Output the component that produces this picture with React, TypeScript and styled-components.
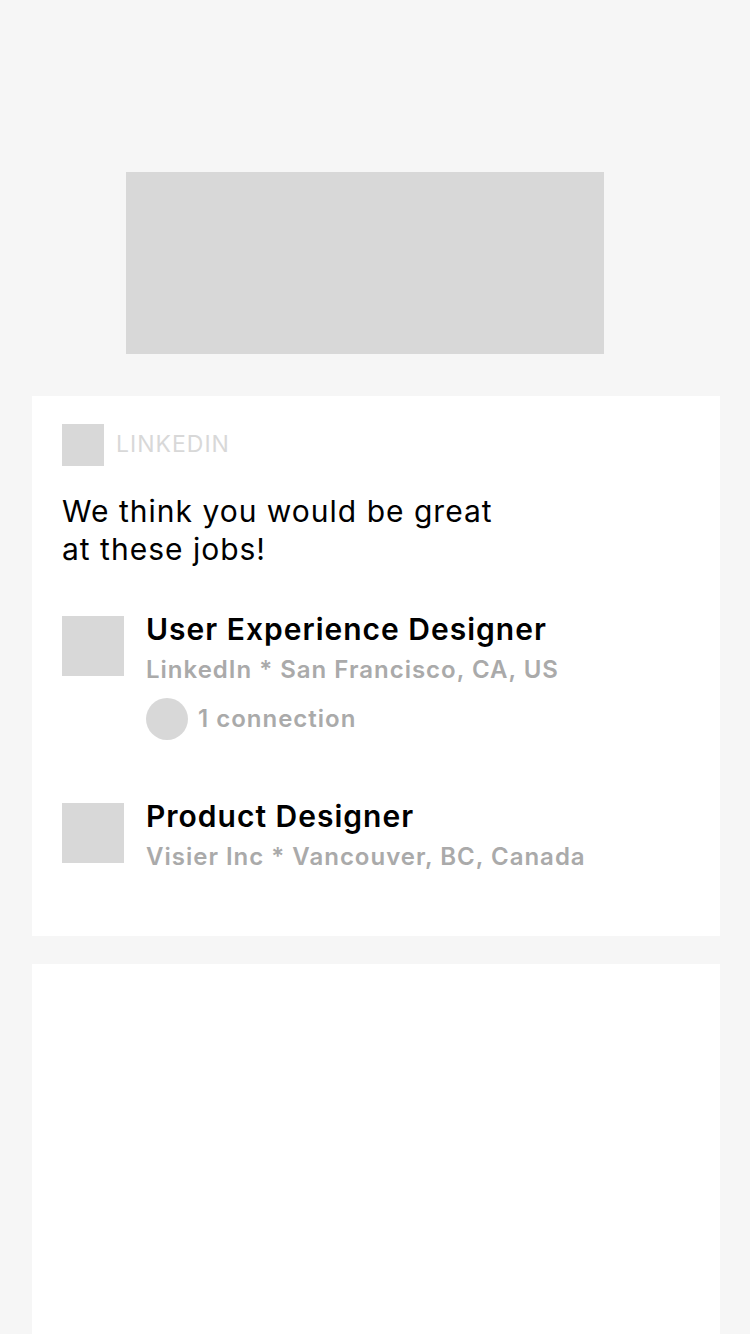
import React from "react";
import styled, { createGlobalStyle } from "styled-components";

const GlobalStyle = createGlobalStyle`
  * { box-sizing: border-box; }
  html, body, #root { height: 100%; }
  body {
    margin: 0;
    background: #f6f6f6;
    font-family: Inter, "Liberation Sans", sans-serif;
    color: #000;
  }
`;

const Page = styled.main`
  min-height: 100%;
  display: flex;
  flex-direction: column;
  gap: 28px;
  padding: 172px 30px 0 32px;
`;

const Banner = styled.div`
  width: 70%;
  max-width: 478px;
  height: 182px;
  margin: 0 22px 14px 94px;
  background: #d8d8d8;
`;

const Card = styled.section<{ $fill?: boolean }>`
  background: #fff;
  padding: 28px 30px 58px;
  flex: ${(p) => (p.$fill ? "1 0 auto" : "none")};
`;

const Source = styled.header`
  display: flex;
  align-items: flex-start;
  gap: 12px;
  color: #d8d8d8;
  font-size: 23px;
  line-height: 40px;
  letter-spacing: 1px;
`;

const SourceLogo = styled.span`
  width: 42px;
  height: 42px;
  background: #d8d8d8;
`;

const Headline = styled.h1`
  margin: 26px 0 0;
  font-size: 30px;
  font-weight: 400;
  line-height: 38px;
  letter-spacing: 1px;
`;

const JobList = styled.ul`
  list-style: none;
  margin: 41px 0 0;
  padding: 0;
  display: flex;
  flex-direction: column;
  gap: 56px;
`;

const Job = styled.li`
  display: flex;
  align-items: flex-start;
  gap: 22px;
`;

const JobLogo = styled.div`
  flex: none;
  width: 62px;
  height: 60px;
  margin-top: 7px;
  background: #d8d8d8;
`;

const JobTitle = styled.h2`
  margin: 0;
  font-size: 30px;
  font-weight: 600;
  line-height: 40px;
  letter-spacing: 1px;
`;

const Meta = styled.p`
  margin: 0;
  font-size: 24px;
  font-weight: 600;
  line-height: 42px;
  letter-spacing: 1px;
  color: #aaa;
`;

const Connection = styled.div`
  display: flex;
  align-items: center;
  gap: 10px;
  margin-top: 7px;
`;

const Avatar = styled.span`
  width: 42px;
  height: 42px;
  border-radius: 50%;
  background: #d8d8d8;
`;

const jobs = [
  { title: "User Experience Designer", place: "LinkedIn * San Francisco, CA, US", connections: "1 connection" },
  { title: "Product Designer", place: "Visier Inc * Vancouver, BC, Canada" },
];

export default function App() {
  return (
    <>
      <GlobalStyle />
      <Page>
        <Banner />
        <Card>
          <Source>
            <SourceLogo />
            <span>LINKEDIN</span>
          </Source>
          <Headline>
            We think you would be great
            <br />
            at these jobs!
          </Headline>
          <JobList>
            {jobs.map((job) => (
              <Job key={job.title}>
                <JobLogo />
                <div>
                  <JobTitle>{job.title}</JobTitle>
                  <Meta>{job.place}</Meta>
                  {job.connections && (
                    <Connection>
                      <Avatar />
                      <Meta>{job.connections}</Meta>
                    </Connection>
                  )}
                </div>
              </Job>
            ))}
          </JobList>
        </Card>
        <Card $fill />
      </Page>
    </>
  );
}
